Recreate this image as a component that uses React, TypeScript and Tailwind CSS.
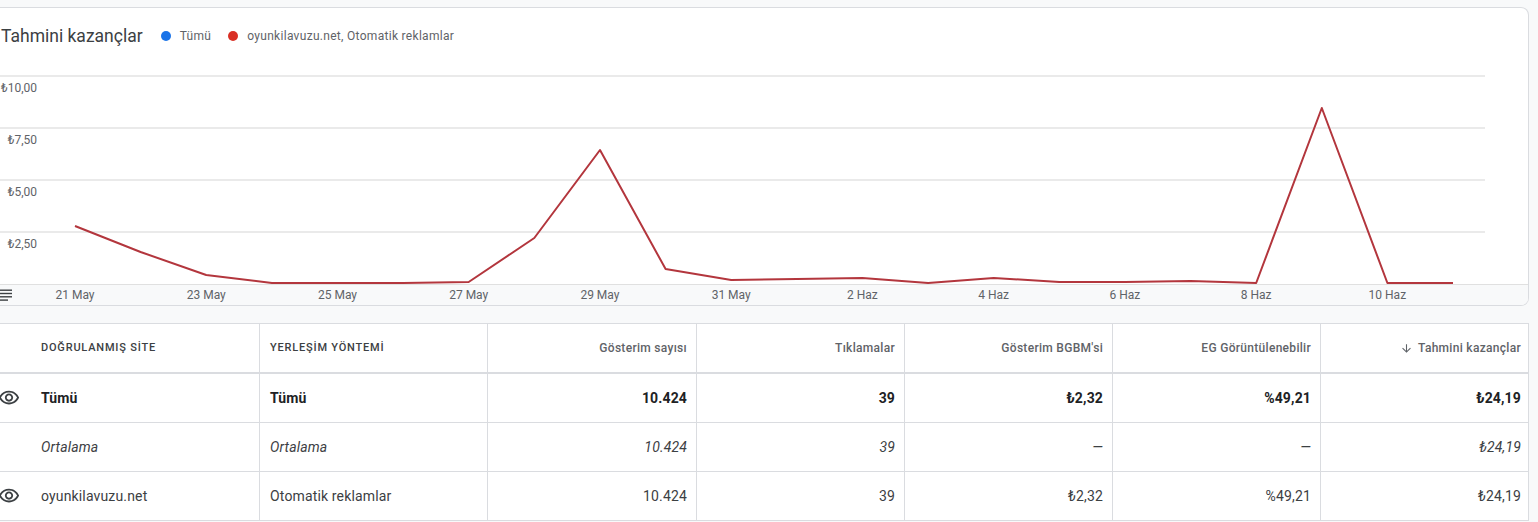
import React from "react";

const ys = [226, 252, 275, 283, 283, 283, 282, 238, 150, 269, 280, 279, 278, 283, 278, 282, 282, 281, 283, 108, 283, 283];
const points = ys.map((y, i) => `${(75 + 65.62 * i).toFixed(1)},${y - 70}`).join(" ");

const xLabels = ["21 May", "23 May", "25 May", "27 May", "29 May", "31 May", "2 Haz", "4 Haz", "6 Haz", "8 Haz", "10 Haz"];
const yLabels = [
  { y: 22, t: "₺10,00" },
  { y: 74, t: "₺7,50" },
  { y: 126, t: "₺5,00" },
  { y: 178, t: "₺2,50" },
];

const cols = "grid grid-cols-[260px_228px_209px_208px_208px_208px_208px]";

const rows = [
  { icon: true, site: "Tümü", method: "Tümü", vals: ["10.424", "39", "₺2,32", "%49,21", "₺24,19"], kind: "bold" },
  { icon: false, site: "Ortalama", method: "Ortalama", vals: ["10.424", "39", "—", "—", "₺24,19"], kind: "italic" },
  { icon: true, site: "oyunkilavuzu.net", method: "Otomatik reklamlar", vals: ["10.424", "39", "₺2,32", "%49,21", "₺24,19"], kind: "normal" },
];

const EyeIcon = () => (
  <svg width="22" height="22" viewBox="0 0 24 24" fill="#3c4043">
    <path d="M12 6c3.79 0 7.17 2.13 8.82 5.5C19.17 14.87 15.79 17 12 17s-7.17-2.13-8.82-5.5C4.83 8.13 8.21 6 12 6m0-2C7 4 2.73 7.11 1 11.5 2.73 15.89 7 19 12 19s9.27-3.11 11-7.5C21.27 7.11 17 4 12 4zm0 5c1.38 0 2.5 1.12 2.5 2.5S13.38 14 12 14s-2.5-1.12-2.5-2.5S10.620 9 12 9m0-2c-2.48 0-4.5 2.02-4.5 4.5S9.52 16 12 16s4.5-2.02 4.5-4.5S14.48 7 12 7z" />
  </svg>
);

const App = () => {
  return (
    <div className="w-[1538px] h-[522px] overflow-hidden bg-[#f8f9fa] pt-[7px] font-[Roboto,'DejaVu_Sans',sans-serif]">
      {/* Chart card */}
      <div className="w-[1529px] bg-white border-y border-r border-[#dadce0] rounded-r-lg overflow-hidden">
        <div className="h-[62px] pt-[16px] pl-[1px] flex items-start">
          <div className="flex items-center h-[24px]">
            <span className="text-[17.5px] leading-[24px] text-[#3c4043]">Tahmini kazançlar</span>
            <span className="ml-[18px] w-[10px] h-[10px] rounded-full bg-[#1a73e8]" />
            <span className="ml-[9px] text-[12px] tracking-[0.3px] text-[#5f6368]">Tümü</span>
            <span className="ml-[17px] w-[10px] h-[10px] rounded-full bg-[#d93025]" />
            <span className="ml-[9px] text-[12px] tracking-[0.3px] text-[#5f6368]">oyunkilavuzu.net, Otomatik reklamlar</span>
          </div>
        </div>

        <svg width="1528" height="214" className="block">
          {[6, 58, 110, 162].map((y) => (
            <line key={y} x1="0" x2="1485" y1={y} y2={y} stroke="#e3e3e3" strokeWidth="1.5" />
          ))}
          {yLabels.map((l) => (
            <text key={l.t} x="37" y={l.y} textAnchor="end" fontSize="12" fill="#5f6368" fontFamily="Roboto, 'DejaVu Sans', sans-serif">
              {l.t}
            </text>
          ))}
          <polyline points={points} fill="none" stroke="#b3363d" strokeWidth="2" strokeLinejoin="round" />
        </svg>

        <div className="relative h-[21px] border-t border-[#e0e0e0] bg-[#f8f9fa] flex items-center pl-[9.4px]">
          <svg className="absolute left-0 top-[4px]" width="12" height="12" viewBox="0 0 12 12" fill="#3c4043">
            <rect x="0" y="0.5" width="12" height="1.4" />
            <rect x="0" y="3.8" width="12" height="1.4" />
            <rect x="0" y="7.1" width="12" height="1.4" />
            <rect x="0" y="10.4" width="8" height="1.4" />
          </svg>
          {xLabels.map((l) => (
            <span key={l} className="w-[131.24px] shrink-0 text-center text-[12px] text-[#5f6368]">
              {l}
            </span>
          ))}
        </div>
      </div>

      {/* Table */}
      <div className="mt-[17px] w-[1529px] bg-white border-t border-r border-[#dadce0] text-[14px] tracking-[0.15px] text-[#3c4043]">
        <div className={`${cols} h-[50px] border-b-2 border-[#dadce0]`}>
          <div className="flex items-center pl-[41px] border-r border-[#dadce0] text-[11px] font-medium tracking-[0.8px] uppercase text-[#3c4043]">
            DOĞRULANMIŞ SİTE
          </div>
          <div className="flex items-center pl-[10px] border-r border-[#dadce0] text-[11px] font-medium tracking-[0.8px] uppercase text-[#3c4043]">
            YERLEŞİM YÖNTEMİ
          </div>
          {["Gösterim sayısı", "Tıklamalar", "Gösterim BGBM'si", "EG Görüntülenebilir"].map((h) => (
            <div key={h} className="flex items-center justify-end pr-[9px] border-r border-[#dadce0] text-[12px] font-medium tracking-[0.3px] text-[#5f6368]">
              {h}
            </div>
          ))}
          <div className="flex items-center justify-end gap-[5px] pr-[8px] text-[12px] font-medium tracking-[0.3px] text-[#5f6368]">
            <svg width="13" height="13" viewBox="0 0 24 24" fill="#5f6368">
              <path d="M20 12l-1.41-1.41L13 16.17V4h-2v12.17l-5.58-5.59L4 12l8 8 8-8z" />
            </svg>
            Tahmini kazançlar
          </div>
        </div>

        {rows.map((r) => {
          const textCls =
            r.kind === "bold" ? "font-bold text-[#202124]" : r.kind === "italic" ? "italic text-[#3c4043]" : "text-[#3c4043]";
          return (
            <div key={r.site} className={`${cols} h-[49px] border-b border-[#dadce0]`}>
              <div className={`relative flex items-center pl-[41px] border-r border-[#dadce0] ${textCls}`}>
                {r.icon && (
                  <span className="absolute left-[-2px] top-1/2 -translate-y-1/2 flex">
                    <EyeIcon />
                  </span>
                )}
                {r.site}
              </div>
              <div className={`flex items-center pl-[10px] border-r border-[#dadce0] ${textCls}`}>{r.method}</div>
              {r.vals.map((v, i) => (
                <div
                  key={i}
                  className={`flex items-center justify-end ${i === 4 ? "pr-[8px]" : "pr-[9px] border-r border-[#dadce0]"} ${textCls}`}
                >
                  {v}
                </div>
              ))}
            </div>
          );
        })}
      </div>
    </div>
  );
};

export default App;
